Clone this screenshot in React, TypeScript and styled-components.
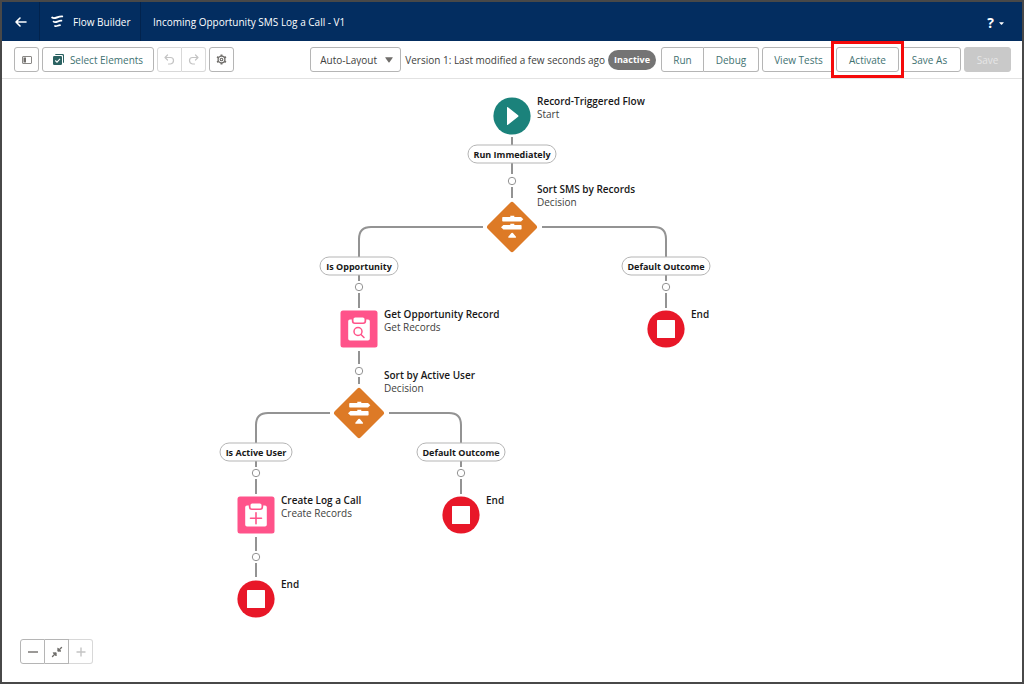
import React from "react";
import styled, { createGlobalStyle, css } from "styled-components";

const GlobalStyle = createGlobalStyle`
  *, *::before, *::after { box-sizing: border-box; }
  html, body, #root { height: 100%; }
  body {
    margin: 0;
    background: #fff;
    color: #3e3e3c;
    font-family: "Open Sans", "Noto Sans", sans-serif;
    font-size: 10px;
    line-height: 12px;
  }
  button, select { font: inherit; color: inherit; }
`;

const navy = "#032d60";
const teal = "#3f7272";
const line = "#939393";
const edge = "#b5b5b5";

const Shell = styled.div`
  display: flex;
  flex-direction: column;
  min-height: 100%;
  border: 2px solid #484848;
`;

const Header = styled.header`
  display: flex;
  align-items: stretch;
  height: 39px;
  background: ${navy};
  color: #fff;
`;

const BackLink = styled.a`
  display: flex;
  align-items: center;
  justify-content: center;
  width: 38px;
  border-right: 1px solid #02234d;
  color: #fff;
`;

const Brand = styled.div`
  display: flex;
  align-items: center;
  gap: 9px;
  width: 101px;
  padding-left: 11px;
  border-right: 1px solid #02234d;
  white-space: nowrap;
`;

const FlowTitle = styled.h1`
  flex: 1;
  align-self: center;
  margin: 0;
  padding-left: 12px;
  font-size: inherit;
  font-weight: 400;
`;

const HelpButton = styled.button`
  display: flex;
  align-items: center;
  gap: 5px;
  padding: 3px 18px 0 0;
  border: 0;
  background: none;
  color: #fff;
  font-size: 14px;
  font-weight: 700;
`;

const Toolbar = styled.div`
  display: flex;
  align-items: center;
  gap: 3px;
  height: 38px;
  padding: 0 11px 0 12px;
  border-bottom: 1px solid #e2e2e2;
  white-space: nowrap;
`;

const Spacer = styled.div`
  flex: 1;
`;

const Group = styled.div`
  display: flex;
  align-items: center;
  & > button + button { border-left: 0; }
  & > button:not(:last-child) { border-top-right-radius: 0; border-bottom-right-radius: 0; }
  & > button:not(:first-child) { border-top-left-radius: 0; border-bottom-left-radius: 0; }
`;

const Button = styled.button<{ $width: number; $tone?: "faded" | "solid" | "icon" }>`
  display: flex;
  align-items: center;
  justify-content: center;
  gap: 6px;
  width: ${(p) => p.$width}px;
  height: 25px;
  padding: 0;
  border: 1px solid ${edge};
  border-radius: 3px;
  background: #fff;
  color: ${teal};
  ${(p) => p.$tone === "icon" && css`color: #706e6b;`}
  ${(p) => p.$tone === "faded" && css`color: #c4c4c4; border-color: #d8d8d8;`}
  ${(p) => p.$tone === "solid" && css`color: #e6e6e6; background: #c9c9c9; border-color: #c9c9c9;`}
`;

const Highlight = styled.div`
  z-index: 1;
  margin: 0 -3px 0 -1px;
  padding: 3px 2px;
  background: #fff;
  outline: 3px solid #f50a0a;
`;

const SelectBox = styled.div`
  display: grid;
  align-items: center;
  width: 91px;
  margin-right: 1px;
  & > * { grid-area: 1 / 1; }
  & > svg { justify-self: end; margin-right: 8px; pointer-events: none; }
`;

const LayoutSelect = styled.select`
  appearance: none;
  width: 100%;
  height: 25px;
  padding: 0 0 0 9px;
  border: 1px solid ${edge};
  border-radius: 3px;
  background: #fff;
`;

const Badge = styled.span`
  width: 48px;
  margin-right: 2px;
  padding: 4px 0;
  border-radius: 10px;
  background: #747474;
  color: #fff;
  font-size: 9px;
  font-weight: 700;
  text-align: center;
`;

const Canvas = styled.main`
  position: relative;
  flex: 1;
  min-height: 600px;
`;

/* Zero-width origin: the flow is laid out around the middle of the canvas. */
const Origin = styled.div`
  position: absolute;
  top: 0;
  left: 50%;
`;

const Connectors = styled.svg`
  position: absolute;
  overflow: visible;
`;

const Node = styled.div<{ $x: number; $y: number }>`
  position: absolute;
  left: ${(p) => p.$x}px;
  top: ${(p) => p.$y}px;
  transform: translate(-50%, -50%);
  & > svg { display: block; }
`;

const NodeLabel = styled.div<{ $x: number; $y: number }>`
  position: absolute;
  left: ${(p) => p.$x}px;
  top: ${(p) => p.$y}px;
  line-height: 13px;
  white-space: nowrap;
`;

const NodeName = styled.div`
  color: #181818;
  font-weight: 600;
`;

const Pill = styled(Node)<{ $width: number }>`
  width: ${(p) => p.$width}px;
  height: 19px;
  border: 1px solid ${edge};
  border-radius: 10px;
  background: #fff;
  color: #181818;
  font-size: 9px;
  font-weight: 700;
  line-height: 17px;
  text-align: center;
  white-space: nowrap;
`;

const ZoomBar = styled.div`
  position: absolute;
  left: 18px;
  bottom: 18px;
`;

const StartIcon = () => (
  <svg width="38" height="38" viewBox="0 0 38 38">
    <circle cx="19" cy="19" r="18.6" fill="#1b827b" />
    <path d="M14 10.6v16.8q0 1 .9.4l10.2-8q.8-.8 0-1.600l-10.200-8q-.9-.6-.9.400z" fill="#fff" />
  </svg>
);

const EndIcon = () => (
  <svg width="38" height="38" viewBox="0 0 38 38">
    <circle cx="19" cy="19" r="18.6" fill="#e81728" />
    <rect x="10" y="10" width="18" height="18" rx="0.6" fill="#fff" />
  </svg>
);

const DecisionIcon = () => (
  <svg width="52" height="52" viewBox="0 0 52 52">
    <rect x="7.600" y="7.600" width="36.800" height="36.800" rx="2.500" transform="rotate(45 26 26)" fill="#dd7a26" />
    <g fill="#fff">
      <path d="M17 16h7.300v-1.200h4V16h6.700l2.300 2.300-2.300 2.300H17q-.8 0-.8-.8v-3q0-.8.8-.8z" />
      <path d="M17.400 24h6.900v-1.200h4V24h6.500q.8 0 .8.8v3q0 .8-.8.8H17.400L15 26.300z" />
      <path d="M26.200 31.800q.7 0 1.100.6l2.700 3.300q.4 1-.5 1h-6.700q-.9 0-.5-1l2.700-3.300q.4-.6 1.200-.6z" />
    </g>
  </svg>
);

const RecordIcon = ({ kind }: { kind: "get" | "create" }) => (
  <svg width="38" height="38" viewBox="0 0 38 38">
    <rect x="0.500" y="0.500" width="37" height="37" rx="2.500" fill="#ff538a" />
    <path d="M10 9.500h1.800v1.600q0 3 3 3h8.400q3 0 3-3V9.500h1.800q1.800 0 1.800 1.800v17.400q0 1.800-1.800 1.800H10q-1.800 0-1.800-1.800V11.300q0-1.800 1.800-1.800z" fill="#fff" />
    <rect x="13.500" y="7.500" width="11" height="5" rx="1.600" fill="#fff" />
    {kind === "get" ? (
      <g fill="none" stroke="#ff538a" strokeWidth="1.500" strokeLinecap="round">
        <circle cx="18" cy="21.500" r="4" />
        <path d="M21 24.500l3 3" />
      </g>
    ) : (
      <path d="M19 16.800v11M13.500 22.300h11" stroke="#ff538a" strokeWidth="1.600" strokeLinecap="round" />
    )}
  </svg>
);

type Item = { x: number; y: number; name: string; type?: string; icon: React.ReactNode; labelDy: number };

const items: Item[] = [
  { x: 0, y: 37, name: "Record-Triggered Flow", type: "Start", icon: <StartIcon />, labelDy: -21 },
  { x: 0, y: 148, name: "Sort SMS by Records", type: "Decision", icon: <DecisionIcon />, labelDy: -44 },
  { x: -153, y: 250, name: "Get Opportunity Record", type: "Get Records", icon: <RecordIcon kind="get" />, labelDy: -21 },
  { x: 154, y: 250, name: "End", icon: <EndIcon />, labelDy: -21 },
  { x: -153, y: 334, name: "Sort by Active User", type: "Decision", icon: <DecisionIcon />, labelDy: -44 },
  { x: -256, y: 436, name: "Create Log a Call", type: "Create Records", icon: <RecordIcon kind="create" />, labelDy: -21 },
  { x: -51, y: 436, name: "End", icon: <EndIcon />, labelDy: -21 },
  { x: -256, y: 520, name: "End", icon: <EndIcon />, labelDy: -21 },
];

const pills = [
  { x: 0, y: 75, width: 89, text: "Run Immediately" },
  { x: -153, y: 187, width: 79, text: "Is Opportunity" },
  { x: 154, y: 187, width: 89, text: "Default Outcome" },
  { x: -256, y: 373, width: 73, text: "Is Active User" },
  { x: -51, y: 373, width: 89, text: "Default Outcome" },
];

const addPoints = [
  [0, 102], [-153, 208], [154, 208], [-153, 292], [-256, 394], [-51, 394], [-256, 478],
];

const connectorPath = [
  "M0 58V66M0 84V95M0 108V119",
  "M-29 148H-141Q-153 148 -153 160V178M30 148H142Q154 148 154 160V178",
  "M-153 196V202M-153 214V229M154 196V202M154 214V229",
  "M-153 272V285M-153 298V305",
  "M-182 334H-244Q-256 334 -256 346V364M-123 334H-63Q-51 334 -51 346V364",
  "M-256 382V388M-256 400V415M-51 382V388M-51 400V415",
  "M-256 458V472M-256 484V498",
].join("");

const BackIcon = () => (
  <svg width="14" height="12" viewBox="0 0 14 12" fill="none" stroke="#fff" strokeWidth="1.600" strokeLinecap="round" strokeLinejoin="round">
    <path d="M12 6H2M6 2L2 6l4 4" />
  </svg>
);

const FlowLogo = () => (
  <svg width="13" height="13" viewBox="0 0 13 13" fill="none" stroke="#fff" strokeLinecap="round">
    <path d="M1.200 2.600C3.600 4.600 6.400 1.200 11.200 1.400" strokeWidth="1.900" />
    <path d="M2.600 6.600C4.800 8.300 6.800 5.600 10.400 5.700" strokeWidth="1.800" />
    <path d="M4 11C5.600 12 6.800 10.200 9 10.200" strokeWidth="1.700" />
  </svg>
);

const PanelIcon = () => (
  <svg width="10" height="8" viewBox="0 0 10 8">
    <rect x="0.500" y="0.500" width="9" height="7" rx="0.500" fill="none" stroke="#8a8886" />
    <rect x="1.500" y="1.500" width="2.500" height="5" fill="#706e6b" />
  </svg>
);

const SelectIcon = () => (
  <svg width="11" height="11" viewBox="0 0 11 11">
    <path d="M3.200 0h6.600Q11 0 11 1.200v6.600q0 1.200-1 1.200V2.200Q10 1 8.800 1H2q0-1 1.200-1z" fill="#2b6262" />
    <rect x="0" y="2" width="9" height="9" rx="1.200" fill="#2b6262" />
    <path d="M2.300 6.500l1.700 1.700 3-3.300" fill="none" stroke="#fff" strokeWidth="1.100" />
  </svg>
);

const TurnIcon = ({ redo }: { redo?: boolean }) => (
  <svg width="11" height="11" viewBox="0 0 11 11" fill="none" stroke="currentColor" strokeWidth="1.200" strokeLinecap="round" strokeLinejoin="round">
    <path transform={redo ? "matrix(-1 0 0 1 11 0)" : undefined} d="M3.500 1L1 3.500 3.500 6M1 3.500h5.500q3 0 3 3t-3 3.500H4.500" />
  </svg>
);

const GearIcon = () => (
  <svg width="11" height="11" viewBox="0 0 11 11" fill="none" stroke="#706e6b">
    <circle cx="5.500" cy="5.500" r="1.300" strokeWidth="1.100" />
    <circle cx="5.500" cy="5.500" r="3.400" strokeWidth="1.300" />
    <path d="M5.500.4v1.700M5.500 8.900v1.700M1.100 2.900l1.400.9M8.500 7.200l1.400.9M1.100 8.100l1.400-.9M8.500 3.800l1.400-.9" strokeWidth="1.900" />
  </svg>
);

const CaretIcon = ({ width, height, fill }: { width: number; height: number; fill: string }) => (
  <svg width={width} height={height} viewBox="0 0 8 6" preserveAspectRatio="none">
    <path d="M.6.300h6.800q.6 0 .3.500L4.500 5.300q-.5.500-1 0L.3.800Q0 .300.6.300z" fill={fill} />
  </svg>
);

const FitIcon = () => (
  <svg width="12" height="12" viewBox="0 0 12 12" fill="#706e6b" stroke="#706e6b">
    <path d="M6.800 2v3.200H10zM2 6.800h3.200V10z" strokeWidth="0.800" strokeLinejoin="round" />
    <path d="M7.500 4.500L10.500 1.500M1.500 10.500l3-3" strokeWidth="1.400" strokeLinecap="round" />
  </svg>
);

const LineIcon = ({ d }: { d: string }) => (
  <svg width="12" height="12" viewBox="0 0 12 12" fill="none" stroke="currentColor" strokeWidth="1.400">
    <path d={d} />
  </svg>
);

export default function App() {
  return (
    <>
      <GlobalStyle />
      <Shell>
        <Header>
          <BackLink href="#" aria-label="Back"><BackIcon /></BackLink>
          <Brand><FlowLogo />Flow Builder</Brand>
          <FlowTitle>Incoming Opportunity SMS Log a Call - V1</FlowTitle>
          <HelpButton aria-label="Help">?<CaretIcon width={5} height={3} fill="#fff" /></HelpButton>
        </Header>
        <Toolbar>
          <Button $width={25} $tone="icon" aria-label="Toggle toolbox"><PanelIcon /></Button>
          <Button $width={112}><SelectIcon />Select Elements</Button>
          <Group>
            <Button $width={25} $tone="faded" aria-label="Undo"><TurnIcon /></Button>
            <Button $width={24} $tone="faded" aria-label="Redo"><TurnIcon redo /></Button>
          </Group>
          <Button $width={25} $tone="icon" aria-label="Settings"><GearIcon /></Button>
          <Spacer />
          <SelectBox>
            <LayoutSelect aria-label="Layout mode" defaultValue="auto">
              <option value="auto">Auto-Layout</option>
            </LayoutSelect>
            <CaretIcon width={8} height={6} fill="#706e6b" />
          </SelectBox>
          <span>Version 1: Last modified a few seconds ago</span>
          <Badge>Inactive</Badge>
          <Group>
            <Button $width={43}>Run</Button>
            <Button $width={55}>Debug</Button>
          </Group>
          <Group>
            <Button $width={73}>View Tests</Button>
            <Highlight><Button $width={63}>Activate</Button></Highlight>
            <Button $width={63}>Save As</Button>
          </Group>
          <Button $width={47} $tone="solid">Save</Button>
        </Toolbar>
        <Canvas>
          <Origin>
            <Connectors width="1" height="1" fill="none" stroke={line}>
              <path d={connectorPath} strokeWidth="2" />
              {addPoints.map(([x, y]) => (
                <circle key={`${x},${y}`} cx={x} cy={y} r="3.700" fill="#fff" strokeWidth="1" />
              ))}
            </Connectors>
            {items.map((item) => (
              <React.Fragment key={`${item.x},${item.y}`}>
                <Node $x={item.x} $y={item.y}>{item.icon}</Node>
                <NodeLabel $x={item.x + 25} $y={item.y + item.labelDy}>
                  <NodeName>{item.name}</NodeName>
                  {item.type}
                </NodeLabel>
              </React.Fragment>
            ))}
            {pills.map((pill) => (
              <Pill key={`${pill.x},${pill.y}`} $x={pill.x} $y={pill.y} $width={pill.width}>{pill.text}</Pill>
            ))}
          </Origin>
          <ZoomBar>
            <Group>
              <Button $width={25} $tone="icon" aria-label="Zoom out"><LineIcon d="M1 6h10" /></Button>
              <Button $width={24} $tone="icon" aria-label="Zoom to fit"><FitIcon /></Button>
              <Button $width={24} $tone="faded" aria-label="Zoom in"><LineIcon d="M1.500 6h9M6 1.500v9" /></Button>
            </Group>
          </ZoomBar>
        </Canvas>
      </Shell>
    </>
  );
}
